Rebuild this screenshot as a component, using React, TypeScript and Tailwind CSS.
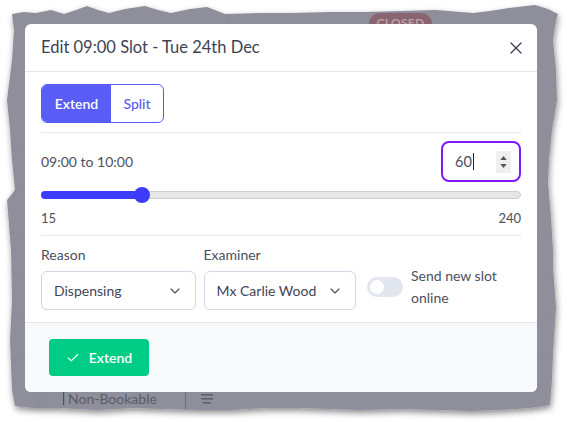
import { Check, ChevronDown, X } from "lucide-react";

const TORN =
  "M12 14 L24 12 L36 13 L51 10 L64 14 L76 10 L87 6 L98 10 L109 13 L125 9 L145 6 L158 10 L171 13 L190 9 L207 7 L225 14 L260 13 L291 13 L330 12 L364 12 L400 11 L436 10 L473 13 L490 11 L509 8 L535 5 L548 9 L558 14 " +
  "L556 20 L553 40 L556 70 L557 100 L552 130 L549 160 L548 183 L551 217 L553 250 L553 267 L556 307 L553 353 L552 380 L550 405 " +
  "L530 408 L500 410 L470 411 L440 410 L400 409 L360 410 L300 408 L267 408 L230 410 L200 410 L160 409 L133 408 L97 410 L60 408 L33 408 L15 406 " +
  "L12 390 L10 340 L12 300 L11 250 L7 200 L15 190 L12 160 L10 130 L7 100 L12 60 L14 30 Z";

function Backdrop() {
  return (
    <svg className="absolute inset-0" width={567} height={422} viewBox="0 0 567 422">
      <defs>
        <filter id="shadow" x="-5%" y="-5%" width="110%" height="115%">
          <feDropShadow dx="1" dy="3" stdDeviation="3" floodColor="#000" floodOpacity="0.45" />
        </filter>
        <clipPath id="torn">
          <path d={TORN} />
        </clipPath>
      </defs>
      <path d={TORN} fill="#8e8f9b" filter="url(#shadow)" />
      <g clipPath="url(#torn)" stroke="#8a8b97" strokeWidth="1">
        {[148, 190, 233, 275, 317, 359].map((y) => (
          <line key={y} x1="0" y1={y} x2="567" y2={y} />
        ))}
        <line x1="229" y1="0" x2="229" y2="30" />
        <line x1="40" y1="380" x2="40" y2="422" />
      </g>
      <g clipPath="url(#torn)">
        <rect x="63" y="392" width="1.2" height="13" fill="#4e4f58" />
        <rect x="185" y="392" width="1" height="20" fill="#6f707b" />
        <rect x="201" y="394" width="12" height="1.6" fill="#5f606b" />
        <rect x="201" y="398" width="12" height="1.6" fill="#5f606b" />
        <rect x="203" y="402" width="8" height="1.6" fill="#5f606b" />
      </g>
    </svg>
  );
}

export default function App() {
  return (
    <div className="relative h-[422px] w-[567px] overflow-hidden bg-white font-['Lato',sans-serif]">
      <Backdrop />

      {/* background page bits peeking out from behind the modal */}
      <div className="absolute left-[369px] top-[13px] flex h-[22px] w-[63px] items-start justify-center rounded-full bg-[#8a6470] pt-[1px] text-[12px] font-bold tracking-wide text-[#b9a1a8]">
        CLOSED
      </div>
      <div className="absolute left-[68px] top-[389px] text-[14px] leading-5 text-[#5b5c66]">Non-Bookable</div>

      <div className="relative pl-[25px] pt-[24px]">
        <div className="w-[512px] overflow-hidden rounded-md bg-white text-[#464c5a]">
          <header className="flex h-[48px] items-center justify-between border-b border-[#e4e6eb] px-4">
            <h2 className="text-[16.5px] font-normal text-[#3d4352]">Edit 09:00 Slot - Tue 24th Dec</h2>
            <X size={20} strokeWidth={1.6} className="-mr-[5px] text-[#3b4150]" />
          </header>

          <div className="px-4 pb-3 pt-3">
            <div className="flex h-[39px] w-[123px] overflow-hidden rounded-md border border-[#5a5cf6] text-[14px]">
              <div className="flex w-[69px] items-center justify-center bg-[#5a5cf6] font-semibold text-white">Extend</div>
              <div className="flex flex-1 items-center justify-center font-medium text-[#5a5cf6]">Split</div>
            </div>

            <div className="mt-[9px] border-t border-[#e4e6eb]" />

            <div className="mt-2 flex items-center justify-between">
              <span className="text-[14px] text-[#4a5060]">09:00 to 10:00</span>
              <div className="flex h-[41px] w-[80px] items-center rounded-lg border-2 border-[#8118fb] pl-[12px] pr-[8px]">
                <span className="text-[14.5px] text-[#4a5060]">60</span>
                <span className="ml-[1px] h-[17px] w-px bg-[#222]" />
                <div className="ml-auto flex h-[22px] w-[15px] flex-col items-center justify-center gap-[4px] bg-[#efefef]">
                  <svg width="7" height="4" viewBox="0 0 8 5">
                    <path d="M4 0 L8 5 L0 5 Z" fill="#555" />
                  </svg>
                  <svg width="7" height="4" viewBox="0 0 8 5">
                    <path d="M0 0 L8 0 L4 5 Z" fill="#555" />
                  </svg>
                </div>
              </div>
            </div>

            <div className="relative mt-[5px] flex h-4 items-center">
              <div className="h-2 w-full rounded-full border border-[#cdcdcd] bg-[#e7e7e7]" />
              <div className="absolute left-0 top-[4px] h-2 w-[21%] rounded-full bg-[#3c3cfa]" />
              <div className="absolute left-[93px] top-0 h-4 w-4 rounded-full bg-[#3c3cfa]" />
            </div>

            <div className="mt-[6px] flex justify-between text-[13px] leading-[18px] text-[#4a5060]">
              <span>15</span>
              <span>240</span>
            </div>

            <div className="mt-2 border-t border-[#e4e6eb]" />

            <div className="mt-[9px] flex items-end gap-2">
              <div className="w-[155px]">
                <div className="mb-[6px] text-[14px] leading-5 text-[#4a5060]">Reason</div>
                <div className="flex h-[39px] items-center justify-between rounded-md border border-[#cfd6e2] pl-3 pr-3 text-[14px] text-[#3f4555]">
                  Dispensing
                  <ChevronDown size={16} strokeWidth={1.75} className="text-[#4b5262]" />
                </div>
              </div>
              <div className="w-[153px]">
                <div className="mb-[6px] text-[14px] leading-5 text-[#4a5060]">Examiner</div>
                <div className="flex h-[39px] items-center justify-between rounded-md border border-[#cfd6e2] pl-3 pr-3 text-[14px] text-[#3f4555]">
                  Mx Carlie Wood
                  <ChevronDown size={16} strokeWidth={1.75} className="text-[#4b5262]" />
                </div>
              </div>
              <div className="ml-[3px] flex items-center gap-2 pb-[1px]">
                <div className="flex h-5 w-9 shrink-0 items-center rounded-full bg-[#e2e6ee] px-[3px]">
                  <div className="h-[14px] w-[14px] rounded-full bg-white" />
                </div>
                <span className="w-[110px] text-[14px] leading-[22px] text-[#4a5060]">Send new slot online</span>
              </div>
            </div>
          </div>

          <footer className="h-[70px] border-t border-[#e4e6eb] bg-[#f8f9fb] pl-6 pt-[16px]">
            <div className="flex h-[37px] w-[100px] items-center justify-center gap-[9px] rounded bg-[#00cc85] text-[14px] font-semibold text-white">
              <Check size={14} strokeWidth={2} />
              Extend
            </div>
          </footer>
        </div>
      </div>
    </div>
  );
}
